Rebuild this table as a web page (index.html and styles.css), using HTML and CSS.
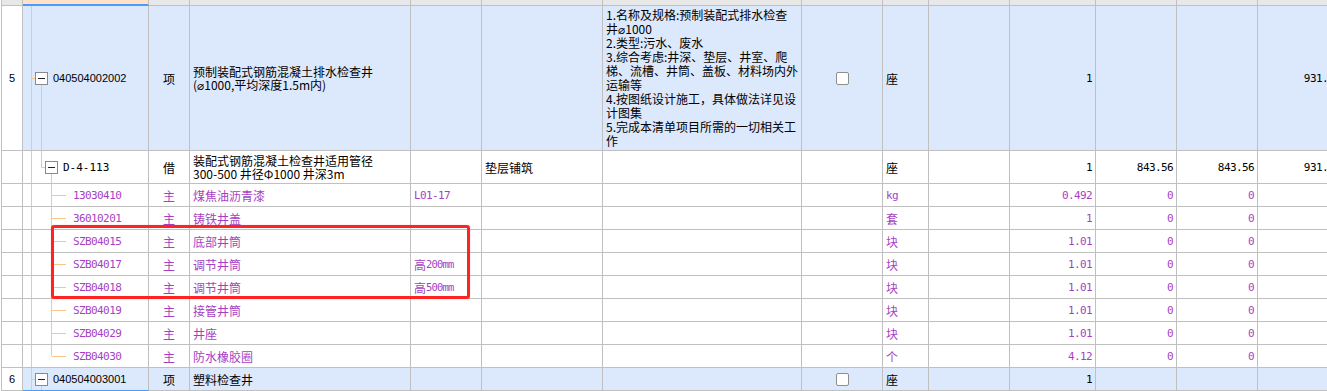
FILE: index.html
```html
<!DOCTYPE html>
<html lang="zh-CN">
<head>
<meta charset="utf-8">
<title>清单</title>
<link rel="stylesheet" href="styles.css">
</head>
<body>
<div class="sheet">
  <div class="row head">
    <div class="c first"></div><div class="c hsel"></div><div class="c"></div><div class="c"></div><div class="c"></div><div class="c"></div><div class="c"></div><div class="c"></div><div class="c"></div><div class="c"></div><div class="c"></div><div class="c"></div><div class="c"></div><div class="c"></div>
  </div>

  <div class="row big sel">
    <div class="c first ctr plain sans">5</div>
    <div class="c tree-root sans"><span class="tg"></span><span class="code">040504002002</span></div>
    <div class="c ctr">项</div>
    <div class="c name"><div>预制装配式钢筋混凝土排水检查井<br>(⌀1000,平均深度1.5m内)</div></div>
    <div class="c"></div>
    <div class="c"></div>
    <div class="c desc"><div>1.名称及规格:预制装配式排水检查<br>井⌀1000<br>2.类型:污水、废水<br>3.综合考虑:井深、垫层、井室、爬<br>梯、流槽、井筒、盖板、材料场内外<br>运输等<br>4.按图纸设计施工，具体做法详见设<br>计图集<br>5.完成本清单项目所需的一切相关工<br>作</div></div>
    <div class="c ctr"><span class="cb"></span></div>
    <div class="c">座</div>
    <div class="c"></div>
    <div class="c num mono">1</div>
    <div class="c"></div>
    <div class="c"></div>
    <div class="c num mono">931.51</div>
  </div>

  <div class="row mid">
    <div class="c first"></div>
    <div class="c tree-mid mono"><span class="tg"></span><span class="code">D-4-113</span></div>
    <div class="c ctr">借</div>
    <div class="c name"><div>装配式钢筋混凝土检查井适用管径<br>300-500 井径Φ1000 井深3m</div></div>
    <div class="c"></div>
    <div class="c">垫层铺筑</div>
    <div class="c"></div>
    <div class="c"></div>
    <div class="c">座</div>
    <div class="c"></div>
    <div class="c num mono">1</div>
    <div class="c num mono">843.56</div>
    <div class="c num mono">843.56</div>
    <div class="c num mono">931.51</div>
  </div>

  <div class="row mat">
    <div class="c first"></div>
    <div class="c tree-leaf mono">13030410</div>
    <div class="c ctr">主</div>
    <div class="c">煤焦油沥青漆</div>
    <div class="c mono">L01-17</div>
    <div class="c"></div><div class="c"></div><div class="c"></div>
    <div class="c mono">kg</div>
    <div class="c"></div>
    <div class="c num mono">0.492</div>
    <div class="c num mono">0</div>
    <div class="c num mono">0</div>
    <div class="c"></div>
  </div>

  <div class="row mat">
    <div class="c first"></div>
    <div class="c tree-leaf mono">36010201</div>
    <div class="c ctr">主</div>
    <div class="c">铸铁井盖</div>
    <div class="c"></div>
    <div class="c"></div><div class="c"></div><div class="c"></div>
    <div class="c">套</div>
    <div class="c"></div>
    <div class="c num mono">1</div>
    <div class="c num mono">0</div>
    <div class="c num mono">0</div>
    <div class="c"></div>
  </div>

  <div class="row mat">
    <div class="c first"></div>
    <div class="c tree-leaf mono">SZB04015</div>
    <div class="c ctr">主</div>
    <div class="c">底部井筒</div>
    <div class="c"></div>
    <div class="c"></div><div class="c"></div><div class="c"></div>
    <div class="c">块</div>
    <div class="c"></div>
    <div class="c num mono">1.01</div>
    <div class="c num mono">0</div>
    <div class="c num mono">0</div>
    <div class="c"></div>
  </div>

  <div class="row mat">
    <div class="c first"></div>
    <div class="c tree-leaf mono">SZB04017</div>
    <div class="c ctr">主</div>
    <div class="c">调节井筒</div>
    <div class="c spec">高<span class="mono">200mm</span></div>
    <div class="c"></div><div class="c"></div><div class="c"></div>
    <div class="c">块</div>
    <div class="c"></div>
    <div class="c num mono">1.01</div>
    <div class="c num mono">0</div>
    <div class="c num mono">0</div>
    <div class="c"></div>
  </div>

  <div class="row mat">
    <div class="c first"></div>
    <div class="c tree-leaf mono">SZB04018</div>
    <div class="c ctr">主</div>
    <div class="c">调节井筒</div>
    <div class="c spec">高<span class="mono">500mm</span></div>
    <div class="c"></div><div class="c"></div><div class="c"></div>
    <div class="c">块</div>
    <div class="c"></div>
    <div class="c num mono">1.01</div>
    <div class="c num mono">0</div>
    <div class="c num mono">0</div>
    <div class="c"></div>
  </div>

  <div class="row mat">
    <div class="c first"></div>
    <div class="c tree-leaf mono">SZB04019</div>
    <div class="c ctr">主</div>
    <div class="c">接管井筒</div>
    <div class="c"></div>
    <div class="c"></div><div class="c"></div><div class="c"></div>
    <div class="c">块</div>
    <div class="c"></div>
    <div class="c num mono">1.01</div>
    <div class="c num mono">0</div>
    <div class="c num mono">0</div>
    <div class="c"></div>
  </div>

  <div class="row mat">
    <div class="c first"></div>
    <div class="c tree-leaf mono">SZB04029</div>
    <div class="c ctr">主</div>
    <div class="c">井座</div>
    <div class="c"></div>
    <div class="c"></div><div class="c"></div><div class="c"></div>
    <div class="c">块</div>
    <div class="c"></div>
    <div class="c num mono">1.01</div>
    <div class="c num mono">0</div>
    <div class="c num mono">0</div>
    <div class="c"></div>
  </div>

  <div class="row mat">
    <div class="c first"></div>
    <div class="c tree-leaf last mono">SZB04030</div>
    <div class="c ctr">主</div>
    <div class="c">防水橡胶圈</div>
    <div class="c"></div>
    <div class="c"></div><div class="c"></div><div class="c"></div>
    <div class="c">个</div>
    <div class="c"></div>
    <div class="c num mono">4.12</div>
    <div class="c num mono">0</div>
    <div class="c num mono">0</div>
    <div class="c"></div>
  </div>

  <div class="row small sel">
    <div class="c first ctr plain sans">6</div>
    <div class="c tree-root focus sans"><span class="tg"></span><span class="code">040504003001</span></div>
    <div class="c ctr">项</div>
    <div class="c">塑料检查井</div>
    <div class="c"></div>
    <div class="c"></div>
    <div class="c"></div>
    <div class="c ctr"><span class="cb"></span></div>
    <div class="c">座</div>
    <div class="c"></div>
    <div class="c num mono">1</div>
    <div class="c"></div>
    <div class="c"></div>
    <div class="c"></div>
  </div>

  <div class="mark"></div>
</div>
</body>
</html>
```

FILE: styles.css
```css
html, body {
  margin: 0;
  padding: 0;
  background: #ffffff;
  overflow: hidden;
}

body {
  font-family: "Noto Sans CJK SC", "DejaVu Sans", sans-serif;
  font-size: 12px;
  color: #000;
}

.sheet {
  position: relative;
  width: 1327px;
  height: 391px;
  overflow: hidden;
  padding-left: 1px;
  box-sizing: border-box;
}

.row {
  display: grid;
  grid-template-columns: 22px 126px 41px 221px 71px 121px 199px 81px 46px 81px 86px 81px 81px 86px;
  width: 1343px;
}

.head { height: 6px; }
.big { height: 145px; }
.mid { height: 33px; }
.mat, .small { height: 23px; }

.c {
  box-sizing: border-box;
  border-right: 1px solid #c0c0c0;
  border-bottom: 1px solid #c0c0c0;
  display: flex;
  align-items: center;
  padding: 0 3px;
  overflow: hidden;
  white-space: nowrap;
  line-height: 13px;
}

.first { border-left: 1px solid #c0c0c0; }

.head .c {
  background: #e8e8e8;
}
.head .hsel {
  background: #ffe2c6;
  border-bottom: 2px solid #4a9cf6;
}

.sel .c { background-color: #dce8fc; }
.sel .c.plain { background-color: #ffffff; }

.mat .c { color: #a63fc3; }

.ctr { justify-content: center; }
.num { justify-content: flex-end; }

.sans { font-family: "Liberation Sans", "Noto Sans CJK SC", sans-serif; font-size: 11px; }
.mono { font-family: "DejaVu Sans Mono", "Noto Sans CJK SC", monospace; font-size: 11px; letter-spacing: -0.6px; }
.spec { font-size: 12px; }
.spec .mono { font-size: 10.5px; letter-spacing: -0.8px; }

.name { align-items: center; }
.desc { align-items: flex-start; padding-top: 2px; }
.desc > div { line-height: 14px; }

/* tree connectors */
.tree-root, .tree-mid, .tree-leaf {
  --tl: #f8c68c;
  padding-left: 0;
}

.tree-root {
  padding-left: 12px;
  gap: 5px;
  background-image:
    linear-gradient(var(--tl), var(--tl)),
    linear-gradient(var(--tl), var(--tl)),
    linear-gradient(var(--tl), var(--tl));
  background-size: 1px 100%, 3px 1px, 1px 50%;
  background-position: 8px 0, 9px 50%, 18px 100%;
  background-repeat: no-repeat;
}

.tree-mid {
  padding-left: 22px;
  gap: 5px;
  background-image:
    linear-gradient(var(--tl), var(--tl)),
    linear-gradient(var(--tl), var(--tl)),
    linear-gradient(var(--tl), var(--tl)),
    linear-gradient(var(--tl), var(--tl));
  background-size: 1px 100%, 1px 50%, 4px 1px, 1px 50%;
  background-position: 8px 0, 18px 0, 18px 50%, 28px 100%;
  background-repeat: no-repeat;
}

.tree-leaf {
  padding-left: 50px;
  background-image:
    linear-gradient(var(--tl), var(--tl)),
    linear-gradient(var(--tl), var(--tl)),
    linear-gradient(var(--tl), var(--tl));
  background-size: 1px 100%, 1px 100%, 14px 1px;
  background-position: 8px 0, 28px 0, 29px 50%;
  background-repeat: no-repeat;
}
.tree-leaf.last {
  background-size: 1px 100%, 1px 50%, 14px 1px;
}

.focus { border-bottom-color: #4a9cf6; }

.tg {
  flex: none;
  position: relative;
  width: 13px;
  height: 13px;
  box-sizing: border-box;
  border: 1px solid #8a8a8a;
  background: #ffffff;
}
.tg::after {
  content: "";
  position: absolute;
  left: 2px;
  width: 7px;
  top: 5px;
  height: 1px;
  background: #222;
}

.code { letter-spacing: 0; }

.cb {
  width: 13px;
  height: 13px;
  box-sizing: border-box;
  border: 1px solid #8e8e8e;
  border-radius: 2px;
  background: #ffffff;
}

.mark {
  position: absolute;
  left: 51px;
  top: 225px;
  width: 419px;
  height: 74px;
  box-sizing: border-box;
  border: 3px solid #ff2424;
  border-radius: 3px;
  box-shadow: 0 0 1px rgba(255, 0, 0, 0.5);
  pointer-events: none;
}
```
